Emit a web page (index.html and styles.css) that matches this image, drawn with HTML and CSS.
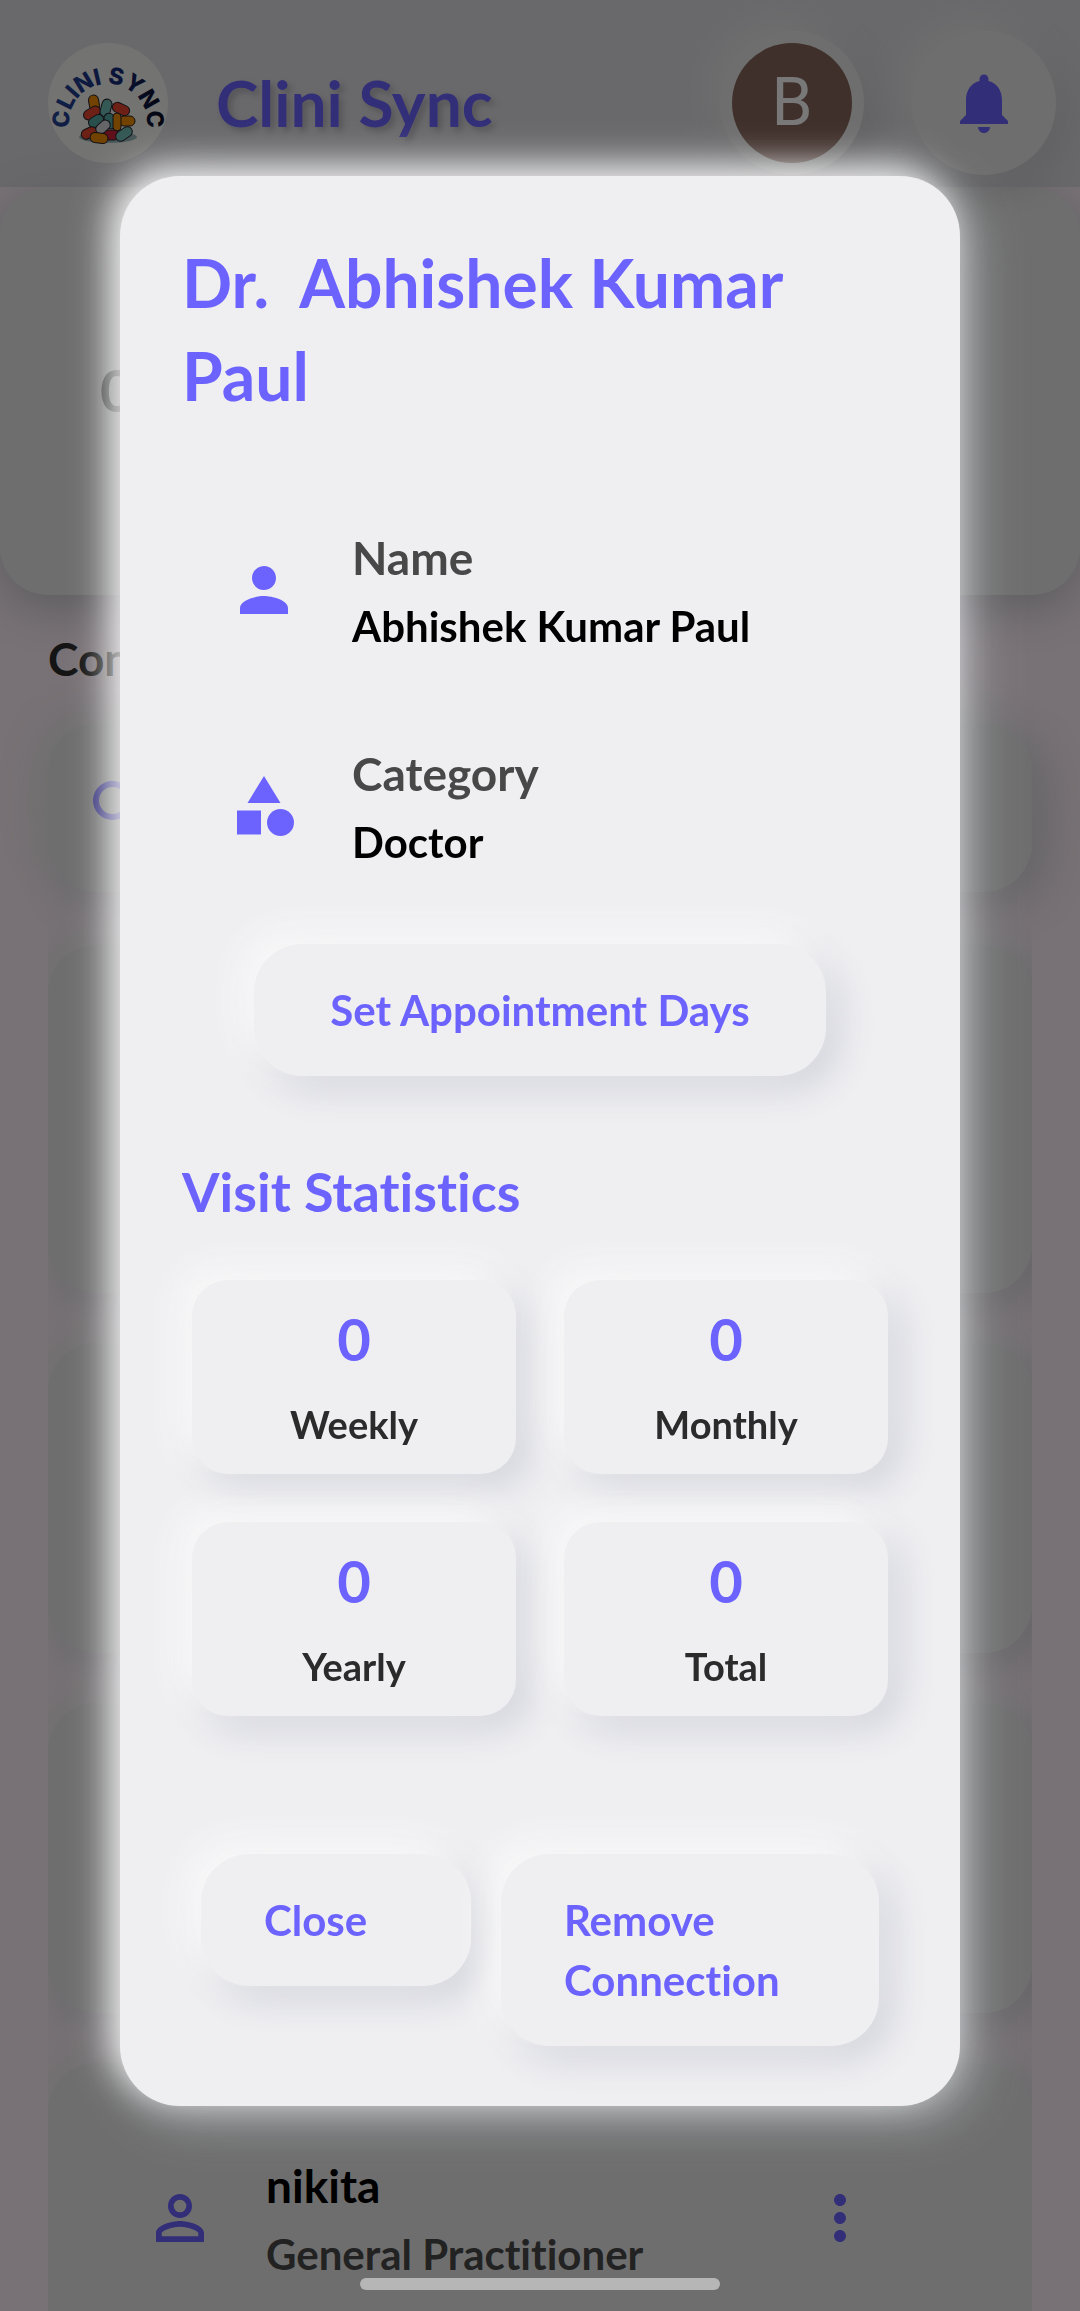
FILE: index.html
```html
<!DOCTYPE html>
<html lang="en">
<head>
<meta charset="utf-8">
<meta name="viewport" content="width=device-width, initial-scale=1">
<title>Clini Sync</title>
<link rel="stylesheet" href="styles.css">
</head>
<body>
<div class="screen">
  <header class="app-bar">
    <svg class="logo" viewBox="0 0 120 120" role="img" aria-label="Clini Sync logo">
      <defs>
        <linearGradient id="ink" x1="0" y1="0" x2="1" y2="0">
          <stop offset="0" stop-color="#26479c"/>
          <stop offset="0.6" stop-color="#142a78"/>
          <stop offset="1" stop-color="#05070f"/>
        </linearGradient>
        <path id="arc" d="M32 107A39 39 0 1 1 88 107"/>
      </defs>
      <circle cx="60" cy="60" r="60" fill="#f4f4f0"/>
      <text class="logo-text" fill="url(#ink)" text-anchor="middle"><textPath href="#arc" startOffset="50%">CLINI SYNC</textPath></text>
      <ellipse cx="60" cy="94" rx="29" ry="6" fill="#93b5b5"/>
      <g stroke="#26222e" stroke-width="1">
        <rect x="-8" y="-5" width="16" height="10" rx="5" fill="#f28c00" transform="translate(46 60) rotate(80)"/>
        <rect x="-9" y="-5" width="18" height="10" rx="5" fill="#e8452f" transform="translate(44 70) rotate(-30)"/>
        <rect x="-9" y="-5" width="18" height="10" rx="5" fill="#e8452f" transform="translate(73 66) rotate(25)"/>
        <rect x="-9" y="-5" width="18" height="10" rx="5" fill="#6fbdb5" transform="translate(58 65) rotate(-75)"/>
        <rect x="-8" y="-5" width="16" height="10" rx="5" fill="#58a9a2" transform="translate(62 78) rotate(70)"/>
        <rect x="-8" y="-5" width="16" height="10" rx="5" fill="#58a9a2" transform="translate(48 78) rotate(-32)"/>
        <rect x="-8" y="-5" width="16" height="10" rx="5" fill="#f28c00" transform="translate(79 78)"/>
        <rect x="-9" y="-4" width="18" height="8" rx="4" fill="#f28c00" transform="translate(69 79) rotate(90)"/>
        <rect x="-8" y="-5" width="16" height="10" rx="5" fill="#e8452f" transform="translate(41 90) rotate(-25)"/>
        <rect x="-8" y="-5" width="16" height="10" rx="5" fill="#c92338" transform="translate(63 92)"/>
        <rect x="-8" y="-5" width="16" height="10" rx="5" fill="#d8d8de" transform="translate(55 84) rotate(-42)"/>
        <rect x="-9" y="-5" width="18" height="10" rx="5" fill="#6fbdb5" transform="translate(76 91) rotate(-35)"/>
        <rect x="-9" y="-5" width="18" height="10" rx="5" fill="#f28c00" transform="translate(51 95) rotate(8)"/>
      </g>
    </svg>
    <h1 class="brand">Clini Sync</h1>
    <div class="bar-actions">
      <button class="round" type="button" aria-label="Account"><span class="avatar">B</span></button>
      <button class="round" type="button" aria-label="Notifications">
        <svg class="icon" viewBox="0 0 24 24"><path d="M12 22c1.100 0 2-.9 2-2h-4c0 1.100.890 2 2 2zm6-6v-5c0-3.070-1.640-5.640-4.500-6.320V4c0-.830-.670-1.500-1.500-1.500s-1.500.670-1.500 1.500v.680C7.630 5.360 6 7.920 6 11v5l-2 2v1h16v-1l-2-2z"/></svg>
      </button>
    </div>
  </header>

  <main>
    <section class="summary"><span class="summary-count">0</span></section>
    <h2 class="list-title">Con</h2>
    <div class="search">
      <svg class="icon" viewBox="0 0 24 24" aria-hidden="true"><path d="M15.500 14h-.790l-.280-.270A6.470 6.470 0 0 0 16 9.500 6.500 6.500 0 1 0 9.500 16c1.610 0 3.090-.590 4.230-1.570l.270.280v.790l5 4.990L20.490 19l-4.990-5zm-6 0C7.010 14 5 11.990 5 9.500S7.010 5 9.500 5 14 7.010 14 9.500 11.990 14 9.500 14z"/></svg>
    </div>
    <ul class="people">
      <li class="person person-tall"></li>
      <li class="person"></li>
      <li class="person"></li>
      <li class="person">
        <svg class="icon" viewBox="0 0 24 24" aria-hidden="true"><path d="M12 5.900a2.100 2.100 0 1 1 0 4.200 2.100 2.100 0 0 1 0-4.200m0 9c2.970 0 6.100 1.460 6.100 2.100v1.100H5.900V17c0-.640 3.130-2.100 6.100-2.100M12 4C9.790 4 8 5.790 8 8s1.790 4 4 4 4-1.790 4-4-1.790-4-4-4zm0 9c-2.670 0-8 1.340-8 4v3h16v-3c0-2.660-5.330-4-8-4z"/></svg>
        <div class="person-text">
          <div class="person-name">nikita</div>
          <div class="person-role">General Practitioner</div>
        </div>
        <button class="more" type="button" aria-label="More options">
          <svg class="icon" viewBox="0 0 24 24"><path d="M12 8c1.100 0 2-.9 2-2s-.9-2-2-2-2 .9-2 2 .9 2 2 2zm0 2c-1.100 0-2 .9-2 2s.9 2 2 2 2-.9 2-2-.9-2-2-2zm0 6c-1.100 0-2 .9-2 2s.9 2 2 2 2-.9 2-2-.9-2-2-2z"/></svg>
        </button>
      </li>
    </ul>
  </main>
</div>

<div class="scrim">
  <section class="dialog" role="dialog" aria-modal="true" aria-labelledby="dialog-title">
    <h2 class="dialog-title" id="dialog-title">Dr.&nbsp; Abhishek Kumar Paul</h2>
    <dl class="details">
      <div class="detail">
        <svg class="icon" viewBox="0 0 24 24" aria-hidden="true"><path d="M12 12c2.210 0 4-1.790 4-4s-1.790-4-4-4-4 1.790-4 4 1.790 4 4 4zm0 2c-2.670 0-8 1.340-8 4v2h16v-2c0-2.660-5.330-4-8-4z"/></svg>
        <div class="detail-text"><dt>Name</dt><dd>Abhishek Kumar Paul</dd></div>
      </div>
      <div class="detail">
        <svg class="icon" viewBox="0 0 24 24" aria-hidden="true"><path d="M12 2l-5.500 9h11z"/><circle cx="17.500" cy="17.500" r="4.500"/><path d="M3 13.500h8v8H3z"/></svg>
        <div class="detail-text"><dt>Category</dt><dd>Doctor</dd></div>
      </div>
    </dl>
    <button class="soft-button schedule" type="button">Set Appointment Days</button>
    <h3 class="stats-title">Visit Statistics</h3>
    <div class="stats">
      <div class="stat"><span class="stat-value">0</span><span class="stat-label">Weekly</span></div>
      <div class="stat"><span class="stat-value">0</span><span class="stat-label">Monthly</span></div>
      <div class="stat"><span class="stat-value">0</span><span class="stat-label">Yearly</span></div>
      <div class="stat"><span class="stat-value">0</span><span class="stat-label">Total</span></div>
    </div>
    <div class="actions">
      <button class="soft-button" type="button">Close</button>
      <button class="soft-button" type="button">Remove Connection</button>
    </div>
  </section>
</div>
<div class="home-indicator"></div>
</body>
</html>
```

FILE: styles.css
```css
:root {
  --accent: #6c63ff;
  --surface: #efeff2;
  --card: #eaeaea;
  --soft: -12px -12px 36px #fafafa, 12px 12px 36px #cfd0d8;
}

* {
  box-sizing: border-box;
}

body {
  margin: 0;
  background: #fef1f9;
  color: #000;
  font-family: Lato, "Open Sans", sans-serif;
  font-weight: 700;
  font-variant-ligatures: none;
}

h1, h2, h3, dl, dd, ul {
  margin: 0;
  padding: 0;
  font-weight: 700;
}

button {
  border: 0;
  padding: 0;
  background: none;
  font: inherit;
  font-variant-ligatures: none;
  color: inherit;
}

.icon {
  display: block;
  flex: none;
  width: 72px;
  height: 72px;
  fill: var(--accent);
}

.screen {
  height: 100vh;
  overflow: hidden;
}

/* App bar */
.app-bar {
  display: flex;
  align-items: center;
  height: 187px;
  padding: 18px 24px 0 48px;
  background: #dfdfe4;
}

.logo {
  flex: none;
  width: 120px;
  height: 120px;
  overflow: visible;
}

.logo-text {
  font: 800 23px Inter, sans-serif;
}

.brand {
  margin-left: 48px;
  color: var(--accent);
  font-size: 64px;
  line-height: 80px;
  text-shadow: 4px 4px 6px #b4b4bc;
}

.bar-actions {
  display: flex;
  gap: 48px;
  margin-left: auto;
}

.round {
  display: grid;
  place-items: center;
  width: 144px;
  height: 144px;
  border-radius: 50%;
  background: var(--card);
  box-shadow: -12px -12px 36px #ececec, 12px 12px 36px #cacace;
}

.avatar {
  width: 120px;
  border-radius: 50%;
  background: #87665c;
  color: #fff;
  font: 400 66px/120px Roboto, sans-serif;
}

/* Dashboard */
.summary {
  height: 408px;
  padding: 163px 100px;
  border-radius: 48px;
  background: var(--card);
  box-shadow: 0 12px 48px #c4c2c8;
}

.summary-count {
  color: #5c5c5c;
  font-size: 58px;
  line-height: 80px;
}

.list-title {
  margin: 34px 48px 35px;
  color: #2b2b2b;
  font-size: 46px;
  line-height: 60px;
}

.search {
  display: flex;
  align-items: center;
  height: 168px;
  margin: 0 48px;
  padding: 0 36px;
  border-radius: 48px;
  background: var(--card);
  box-shadow: -12px -12px 48px #eeeeee, 12px 12px 48px #cfcdd3;
}

.people {
  display: grid;
  gap: 50px;
  margin: 0 48px;
  padding-top: 53px;
  overflow: hidden;
  list-style: none;
}

.person {
  display: flex;
  align-items: center;
  min-height: 310px;
  padding: 0 156px 0 96px;
  border-radius: 48px;
  background: var(--card);
  box-shadow: -12px -12px 48px #f0f0f0, 12px 12px 48px #cfcdd3;
}

.person-tall {
  min-height: 348px;
}

.person-text {
  display: grid;
  gap: 4px;
  flex: 1;
  margin-left: 50px;
}

.person-name {
  font-size: 46px;
  line-height: 68px;
}

.person-role {
  color: #484848;
  font-size: 42px;
  line-height: 60px;
}

/* Dialog */
.scrim {
  position: fixed;
  inset: 0;
  padding: 176px 120px 0;
  background: rgba(0, 0, 0, 0.53);
}

.dialog {
  padding: 60px;
  border-radius: 60px;
  background: var(--surface);
  box-shadow: -10px -10px 36px rgba(255, 255, 255, 0.9), 12px 12px 48px rgba(209, 217, 224, 0.5);
}

.dialog-title {
  margin-bottom: 60px;
  padding-left: 2px;
  color: var(--accent);
  font-size: 66px;
  line-height: 93px;
}

.detail {
  display: flex;
  align-items: center;
  gap: 52px;
  min-height: 216px;
  padding-left: 48px;
}

.detail-text {
  display: grid;
  gap: 4px;
}

.detail dt {
  color: #484848;
  font-size: 46px;
  line-height: 68px;
}

.detail dd {
  font-size: 42px;
  line-height: 60px;
}

.soft-button {
  padding: 36px 63px;
  border-radius: 48px;
  background: var(--surface);
  box-shadow: var(--soft);
  color: var(--accent);
  font-size: 42px;
  line-height: 60px;
  text-align: left;
}

.schedule {
  display: block;
  margin: 30px auto 84px;
  padding: 36px 76px;
}

.stats-title {
  margin-bottom: 56px;
  padding-left: 2px;
  color: var(--accent);
  font-size: 54px;
  line-height: 64px;
}

.stats {
  display: grid;
  grid-template-columns: 1fr 1fr;
  gap: 48px;
  padding: 0 12px;
}

.stat {
  display: grid;
  gap: 20px;
  padding: 20px 12px 24px;
  border-radius: 36px;
  background: var(--surface);
  box-shadow: var(--soft);
  text-align: center;
}

.stat-value {
  color: var(--accent);
  font-size: 58px;
  line-height: 78px;
}

.stat-label {
  color: #2b2b2b;
  font-size: 38px;
  line-height: 52px;
}

.actions {
  display: grid;
  grid-template-columns: 5fr 7fr;
  align-items: start;
  gap: 30px;
  margin-top: 138px;
  padding: 0 21px;
}

.home-indicator {
  position: fixed;
  bottom: 21px;
  left: 50%;
  width: 360px;
  height: 12px;
  margin-left: -180px;
  border-radius: 6px;
  background: #b6b6b6;
}
```
